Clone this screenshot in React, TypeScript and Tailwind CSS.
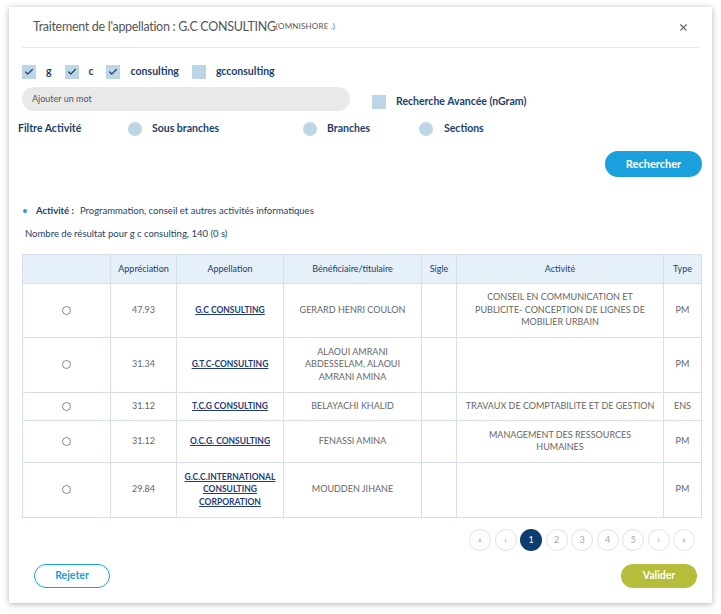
import { Check, X } from 'lucide-react'

type Row = {
  score: string
  name: string[]
  owner: string[]
  sigle: string
  activity: string[]
  type: string
  h: string
}

const rows: Row[] = [
  { score: '47.93', name: ['G.C CONSULTING'], owner: ['GERARD HENRI COULON'], sigle: '', activity: ['CONSEIL EN COMMUNICATION ET', 'PUBLICITE- CONCEPTION DE LIGNES DE', 'MOBILIER URBAIN'], type: 'PM', h: 'h-[54px]' },
  { score: '31.34', name: ['G.T.C-CONSULTING'], owner: ['ALAOUI AMRANI', 'ABDESSELAM, ALAOUI', 'AMRANI AMINA'], sigle: '', activity: [], type: 'PM', h: 'h-[55px]' },
  { score: '31.12', name: ['T.C.G CONSULTING'], owner: ['BELAYACHI KHALID'], sigle: '', activity: ['TRAVAUX DE COMPTABILITE ET DE GESTION'], type: 'ENS', h: 'h-[28px]' },
  { score: '31.12', name: ['O.C.G. CONSULTING'], owner: ['FENASSI AMINA'], sigle: '', activity: ['MANAGEMENT DES RESSOURCES', 'HUMAINES'], type: 'PM', h: 'h-[42px]' },
  { score: '29.84', name: ['G.C.C.INTERNATIONAL', 'CONSULTING', 'CORPORATION'], owner: ['MOUDDEN JIHANE'], sigle: '', activity: [], type: 'PM', h: 'h-[55px]' },
]

const headers = ['', 'Appréciation', 'Appellation', 'Bénéficiaire/titulaire', 'Sigle', 'Activité', 'Type']
const widths = ['w-[88px]', 'w-[66px]', 'w-[107px]', 'w-[138px]', 'w-[35px]', 'w-[207px]', 'w-[38px]']

const CheckBox = ({ checked }: { checked: boolean }) => (
  <span className="w-[14px] h-[14px] bg-[#bcd6e6] flex items-center justify-center">
    {checked ? <Check size={10} strokeWidth={3} className="text-[#1b3f6b]" /> : null}
  </span>
)

const Lines = ({ lines }: { lines: string[] }) => (
  <>
    {lines.map((l) => (
      <div key={l}>{l}</div>
    ))}
  </>
)

export default function App() {
  return (
    <div className="w-[721px] h-[614px] bg-white pt-[7px] pl-[9px] font-['Lato',sans-serif]">
      <div className="w-[703px] h-[596px] bg-white shadow-[0_1px_6px_rgba(0,0,0,0.3)] flex flex-col">
        <div className="mx-[13px] h-[41px] border-b border-[#e3e9f0] flex items-center justify-between pl-[11px] pr-[10px]">
          <div className="text-[12.5px] tracking-[-0.3px] text-[#555] flex items-start">
            <span>Traitement de l'appellation : G.C CONSULTING</span>
            <span className="text-[8px] mt-[2px] tracking-[0.2px]">(OMNISHORE .)</span>
          </div>
          <X size={11} strokeWidth={2.5} className="text-[#666]" />
        </div>

        <div className="px-[13px] flex flex-col">
          <div className="flex items-center h-[14px] mt-[17px] text-[10.5px] font-bold text-[#1b3f6b]">
            <CheckBox checked />
            <span className="ml-[10px] mr-[13px]">g</span>
            <CheckBox checked />
            <span className="ml-[10px] mr-[12px]">c</span>
            <CheckBox checked />
            <span className="ml-[11px] mr-[13px]">consulting</span>
            <CheckBox checked={false} />
            <span className="ml-[10px]">gcconsulting</span>
          </div>

          <div className="flex items-end mt-[8px] h-[24px]">
            <div className="w-[328px] h-[24px] rounded-full bg-[#e9e9e9] flex items-center pl-[10px] text-[9px] text-[#555]">
              Ajouter un mot
            </div>
            <div className="ml-[22px] flex items-center mb-[1px] text-[10.5px] font-bold text-[#1b3f6b]">
              <CheckBox checked={false} />
              <span className="ml-[10px]">Recherche Avancée (nGram)</span>
            </div>
          </div>

          <div className="flex items-center h-[14px] mt-[11px] -ml-[4px] text-[10.5px] font-bold text-[#1b3f6b]">
            <span className="w-[110px]">Filtre Activité</span>
            <span className="w-[14px] h-[14px] rounded-full bg-[#bcd6e6]" />
            <span className="ml-[10px] w-[151px]">Sous branches</span>
            <span className="w-[14px] h-[14px] rounded-full bg-[#bcd6e6]" />
            <span className="ml-[10px] w-[92px]">Branches</span>
            <span className="w-[14px] h-[14px] rounded-full bg-[#bcd6e6]" />
            <span className="ml-[11px]">Sections</span>
          </div>

          <div className="flex justify-end mt-[15px] -mr-[3px]">
            <button className="w-[97px] h-[26px] rounded-full bg-[#1aa0dc] text-white text-[11px] font-bold">
              Rechercher
            </button>
          </div>

          <div className="flex items-center mt-[27px] text-[9.5px] text-[#1b3f6b]">
            <span className="w-[4px] h-[4px] rounded-full bg-[#1aa0dc] ml-[1px] mr-[9px]" />
            <span className="font-bold">Activité :</span>
            <span className="ml-[6px]">Programmation, conseil et autres activités informatiques</span>
          </div>
          <div className="mt-[9px] ml-[3px] text-[9.5px] text-[#1b3f6b]">
            Nombre de résultat pour g c consulting, 140 (0 s)
          </div>

          <table className="mt-[12px] w-[679px] border-collapse table-fixed text-[9px]">
            <thead>
              <tr className="h-[29px] bg-[#e6f0f8] text-[#1b3f6b]">
                {headers.map((h, i) => (
                  <th key={i} className={`${widths[i]} border border-[#d6e0ea] font-normal text-center`}>
                    {h}
                  </th>
                ))}
              </tr>
            </thead>
            <tbody className="text-[#666] leading-[12.5px]">
              {rows.map((r) => (
                <tr key={r.name.join()} className={r.h}>
                  <td className="border border-[#d6e0ea] text-center">
                    <span className="inline-block w-[9px] h-[9px] rounded-full border border-[#888] align-middle" />
                  </td>
                  <td className="border border-[#d6e0ea] text-center">{r.score}</td>
                  <td className="border border-[#d6e0ea] text-center font-bold text-[8.5px] text-[#1f3c77] underline">
                    <Lines lines={r.name} />
                  </td>
                  <td className="border border-[#d6e0ea] text-center">
                    <Lines lines={r.owner} />
                  </td>
                  <td className="border border-[#d6e0ea] text-center">{r.sigle}</td>
                  <td className="border border-[#d6e0ea] text-center">
                    <Lines lines={r.activity} />
                  </td>
                  <td className="border border-[#d6e0ea] text-center">{r.type}</td>
                </tr>
              ))}
            </tbody>
          </table>

          <div className="flex justify-end gap-[3.5px] mt-[11px] pr-[4px] text-[9px] text-[#9aa6b4]">
            {['«', '‹', '1', '2', '3', '4', '5', '›', '»'].map((p) => (
              <span
                key={p}
                className={`w-[22px] h-[22px] rounded-full flex items-center justify-center ${
                  p === '1' ? 'bg-[#0d3c6e] text-white' : 'border border-[#dde4ec]'
                }`}
              >
                {p}
              </span>
            ))}
          </div>

          <div className="flex justify-between mt-[13px] px-[12px]">
            <button className="w-[76px] h-[24px] rounded-full border border-[#1aa0dc] text-[#1aa0dc] text-[10.5px] font-bold">
              Rejeter
            </button>
            <button className="w-[76px] h-[24px] rounded-full bg-[#b5bd3a] text-white text-[10.5px] font-bold -mr-[10px]">
              Valider
            </button>
          </div>
        </div>
      </div>
    </div>
  )
}
